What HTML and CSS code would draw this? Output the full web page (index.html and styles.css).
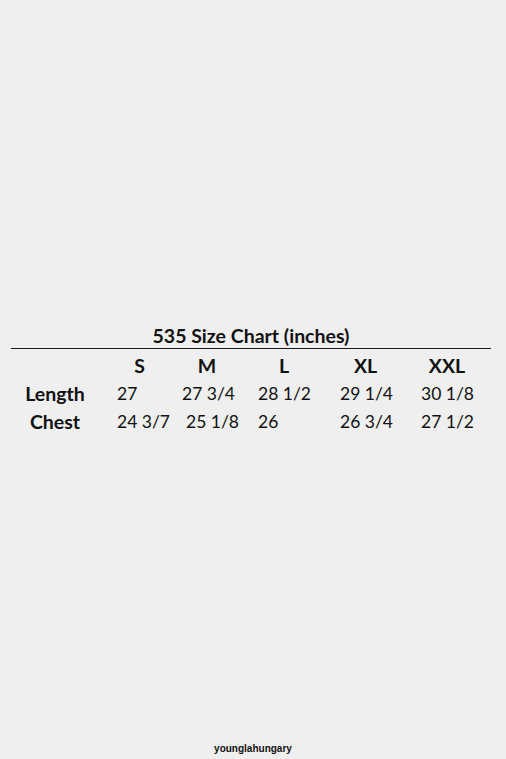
FILE: index.html
```html
<!DOCTYPE html>
<html>
<head>
<meta charset="utf-8">
<link rel="stylesheet" href="styles.css">
</head>
<body>
<div class="page">
  <main class="chart-wrap">
    <div class="chart">
      <h1 class="title">535 Size Chart (inches)</h1>
      <div class="grid">
        <div class="label"></div>
        <div class="head">S</div>
        <div class="head">M</div>
        <div class="head">L</div>
        <div class="head">XL</div>
        <div class="head">XXL</div>

        <div class="label">Length</div>
        <div class="val">27</div>
        <div class="val">27 3/4</div>
        <div class="val">28 1/2</div>
        <div class="val">29 1/4</div>
        <div class="val">30 1/8</div>

        <div class="label">Chest</div>
        <div class="val">24 3/7</div>
        <div class="val shift">25 1/8</div>
        <div class="val">26</div>
        <div class="val">26 3/4</div>
        <div class="val">27 1/2</div>
      </div>
    </div>
  </main>
  <footer class="footer">younglahungary</footer>
</div>
</body>
</html>
```
FILE: styles.css
```css
html, body {
  margin: 0;
  padding: 0;
  background: #efefef;
}
.page {
  height: 759px;
  display: flex;
  flex-direction: column;
  font-family: Lato, "Open Sans", sans-serif;
  color: #111;
}
.chart-wrap {
  flex: 1;
  display: flex;
  align-items: center;
  justify-content: flex-start;
  padding-top: 21px;
  padding-left: 11px;
}
.chart {
  width: 480px;
}
.title {
  margin: 0;
  font-size: 19.5px;
  font-weight: 700;
  text-align: center;
  line-height: 22px;
  padding-bottom: 1px;
  border-bottom: 1.5px solid #1a1a1a;
}
.grid {
  display: grid;
  grid-template-columns: 104px 65px 76px 82px 81px 72px;
  grid-auto-rows: 28px;
  padding-top: 3px;
  align-items: center;
}
.head {
  font-size: 19.5px;
  font-weight: 700;
  text-align: center;
  padding-right: 20px;
}
.head:nth-child(2) { padding-right: 16px; }
.head:nth-child(3) { padding-right: 22px; }
.head:nth-child(4) { padding-right: 26px; }
.head:nth-child(5) { padding-right: 26px; }
.head:nth-child(6) { padding-right: 16px; }
.label {
  font-size: 19.5px;
  font-weight: 700;
  text-align: center;
  padding-right: 16px;
}
.val {
  font-size: 17.5px;
  padding-left: 2px;
}
.val.shift {
  padding-left: 6px;
}
.footer {
  height: 20px;
  text-align: center;
  font-family: "Liberation Sans", Arial, sans-serif;
  font-weight: 700;
  font-size: 10px;
  line-height: 20px;
}
```
